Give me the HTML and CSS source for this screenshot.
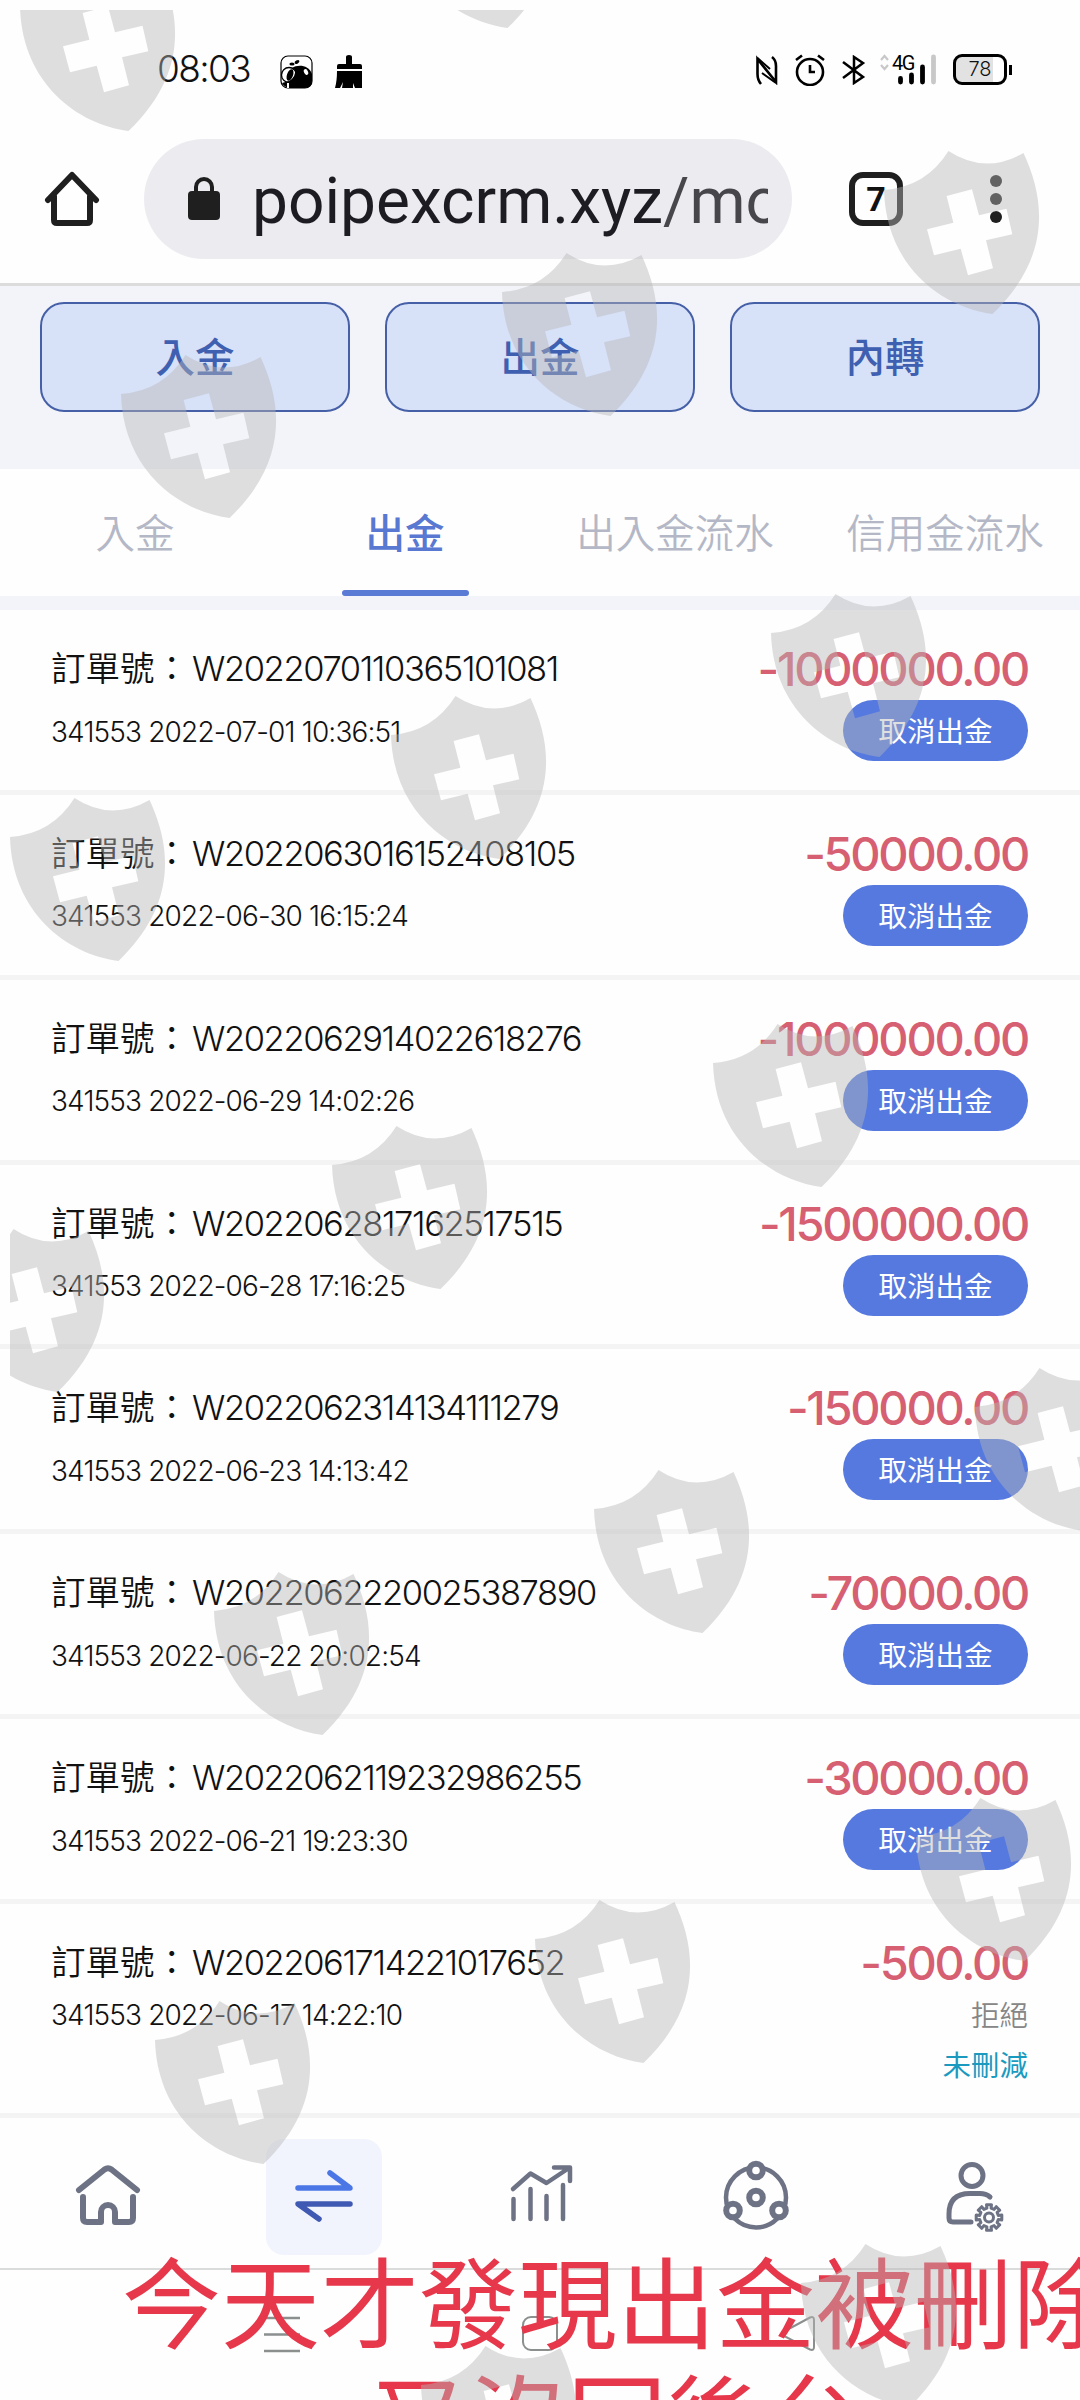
FILE: index.html
```html
<!DOCTYPE html>
<html lang="zh-Hant">
<head>
  <meta charset="UTF-8" />
  <meta name="viewport" content="width=device-width, initial-scale=1.0"/>
  <title>出金</title>
  <link rel="stylesheet" href="styles.css">
</head>
<body>
  <div class="status-bar">
    <span class="time">08:03</span>
    <svg class="app-icon" width="34" height="34" viewBox="0 0 34 34">
      <rect x="1" y="1" width="31" height="32" rx="7" fill="#fff" stroke="#000" stroke-width="1.2"/>
      <path d="M12 13C18 9 29 10 32 19V26Q32 33 25 33H9Q4 32 2 28L9 26Q16 22 15 15Z" fill="#000"/>
      <circle cx="9" cy="20" r="7.5" fill="none" stroke="#000" stroke-width="1.3"/>
      <ellipse cx="10" cy="20" rx="3" ry="6" transform="rotate(20 10 20)"/>
      <ellipse cx="26" cy="17" rx="2" ry="3" fill="#fff" transform="rotate(-25 26 17)"/>
      <ellipse cx="12" cy="9" rx="2.6" ry="1.6"/>
      <ellipse cx="17" cy="7" rx="2.6" ry="1.6" transform="rotate(-30 17 7)"/>
      <path d="M8 28V33" stroke="#fff" stroke-width="2"/>
    </svg>
    <svg class="brush-icon" width="28" height="34" viewBox="0 0 28 34">
      <path d="M11 2Q11 0 14 0T17 2V9H25Q27 9 27 11V14H2V11Q2 9 4 9H11Z"/>
      <path d="M2 16H27V33H20L18 28V33H7L8 27L5 33H0Q2 26 2 16Z"/>
    </svg>
    <div class="status-right">
      <svg width="22" height="30" viewBox="0 0 22 30" fill="none" stroke="#000" stroke-width="2.6">
        <path d="M5 29Q1.5 25 1.5 19V4L20 27V11Q20 5 16 2"/>
        <path d="M6 18L20 28M1.5 3L14 14" stroke-width="2"/>
      </svg>
      <svg width="30" height="32" viewBox="0 0 30 32" fill="none" stroke="#000" stroke-width="2.6">
        <circle cx="15" cy="18" r="13"/>
        <path d="M15 11V18H20M1 6L7 1.5M29 6L23 1.5"/>
      </svg>
      <svg width="24" height="30" viewBox="0 0 24 30" fill="none" stroke="#000" stroke-width="2.5">
        <path d="M1 7L21 22L12 28V2L21 8L1 23"/>
      </svg>
      <svg class="signal" width="56" height="31" viewBox="0 0 56 31">
        <path d="M1 6L4.500 2L8 6M1 11L4.500 15L8 11" fill="none" stroke="#c8c8c8" stroke-width="2.200"/>
        <text x="12" y="16" class="net">4G</text>
        <g stroke-width="4.800" stroke="#000" stroke-linecap="round">
          <path d="M20.500 24.500V28M31.500 21V28M42.500 13V28"/>
          <path d="M53.500 3V28" stroke="#c8c8c8"/>
        </g>
      </svg>
      <div class="battery"><span>78</span></div>
    </div>
  </div>

  <div class="toolbar">
    <svg class="home-icon" width="56" height="58" viewBox="0 0 56 58" fill="none" stroke="#1f1f1f" stroke-width="6" stroke-linecap="round" stroke-linejoin="round">
      <path d="M4 30L28 5L52 30M10 26V50Q10 53 13 53H43Q46 53 46 50V26"/>
    </svg>
    <div class="url-bar">
      <svg width="32" height="44" viewBox="0 0 32 44">
        <rect x="0" y="14" width="32" height="29" rx="4" fill="#1f1f1f"/>
        <path d="M8 15V10A8 8 0 0 1 24 10V15" fill="none" stroke="#1f1f1f" stroke-width="4"/>
      </svg>
      <div class="url">poipexcrm.xyz<span>/mo</span></div>
    </div>
    <div class="tab-count">7</div>
    <div class="dots"><i></i><i></i><i></i></div>
  </div>

  <div class="actions">
    <button>入金</button>
    <button>出金</button>
    <button>內轉</button>
  </div>

  <div class="tabs">
    <div class="tab">入金</div>
    <div class="tab active">出金</div>
    <div class="tab">出入金流水</div>
    <div class="tab">信用金流水</div>
  </div>

  <div class="list">
    <div class="row">
      <div class="order">訂單號：<span>W2022070110365101081</span></div><div class="amount">-1000000.00</div>
      <div class="date">341553 2022-07-01 10:36:51</div><button class="cancel">取消出金</button>
    </div>
    <div class="row">
      <div class="order">訂單號：<span>W2022063016152408105</span></div><div class="amount">-50000.00</div>
      <div class="date">341553 2022-06-30 16:15:24</div><button class="cancel">取消出金</button>
    </div>
    <div class="row">
      <div class="order">訂單號：<span>W2022062914022618276</span></div><div class="amount">-1000000.00</div>
      <div class="date">341553 2022-06-29 14:02:26</div><button class="cancel">取消出金</button>
    </div>
    <div class="row">
      <div class="order">訂單號：<span>W2022062817162517515</span></div><div class="amount">-1500000.00</div>
      <div class="date">341553 2022-06-28 17:16:25</div><button class="cancel">取消出金</button>
    </div>
    <div class="row">
      <div class="order">訂單號：<span>W2022062314134111279</span></div><div class="amount">-150000.00</div>
      <div class="date">341553 2022-06-23 14:13:42</div><button class="cancel">取消出金</button>
    </div>
    <div class="row">
      <div class="order">訂單號：<span>W2022062220025387890</span></div><div class="amount">-70000.00</div>
      <div class="date">341553 2022-06-22 20:02:54</div><button class="cancel">取消出金</button>
    </div>
    <div class="row">
      <div class="order">訂單號：<span>W2022062119232986255</span></div><div class="amount">-30000.00</div>
      <div class="date">341553 2022-06-21 19:23:30</div><button class="cancel">取消出金</button>
    </div>
    <div class="row rejected">
      <div class="order">訂單號：<span>W2022061714221017652</span></div><div class="amount">-500.00</div>
      <div class="date">341553 2022-06-17 14:22:10</div><div class="state">拒絕</div>
      <div class="note">未刪減</div>
    </div>
  </div>

  <div class="bottom-nav">
    <div class="nav-item">
      <svg viewBox="0 0 116 116" stroke-width="6">
        <path d="M29 51L54.500 30.500Q58 28 61.500 30.500L87 51"/>
        <path d="M33 58V79Q33 83 37 83H51V73A7 7 0 0 1 65 73V83H79Q83 83 83 79V58"/>
      </svg>
    </div>
    <div class="nav-item active">
      <svg viewBox="0 0 116 116" stroke-width="5.500">
        <path d="M32 49H84L64 34" stroke="#4b76e6"/>
        <path d="M84 65H32L53 80" stroke="#4059b2"/>
      </svg>
    </div>
    <div class="nav-item">
      <svg viewBox="0 0 116 116" stroke-width="4.500">
        <path d="M31 50L48.500 34.500L64.500 44L87 29M72 28.500H88V42"/>
        <path d="M31.500 60V80M48.500 50V80M64.500 57V80M81 46V80"/>
      </svg>
    </div>
    <div class="nav-item">
      <svg viewBox="0 0 116 116" stroke-width="4.500">
        <circle cx="58" cy="58.500" r="30"/>
        <g fill="#fff" stroke-width="6">
          <circle cx="58" cy="31.500" r="6.800"/>
          <circle cx="35" cy="71.500" r="6.800"/>
          <circle cx="81" cy="71.500" r="6.800"/>
          <circle cx="58" cy="58.500" r="6.800"/>
        </g>
      </svg>
    </div>
    <div class="nav-item">
      <svg viewBox="0 0 116 116" stroke-width="5">
        <circle cx="58" cy="36.500" r="11"/>
        <path d="M76 58Q72 54.500 66 54.500H56Q35 54.500 35 75V79Q35 83 39 83H57"/>
        <g transform="translate(75 78.500)" stroke-width="3">
          <path d="M-2.100 -9.300L-2.500 -12.800H2.500L2.100 -9.300L5.100 -8.100L7.300 -10.800L10.800 -7.300L8.100 -5.100L9.300 -2.100L12.800 -2.500V2.500L9.300 2.100L8.100 5.100L10.800 7.300L7.300 10.800L5.100 8.100L2.100 9.300L2.500 12.800H-2.500L-2.100 9.300L-5.100 8.100L-7.300 10.800L-10.800 7.300L-8.100 5.100L-9.300 2.100L-12.800 2.500V-2.500L-9.300 -2.100L-8.100 -5.100L-10.800 -7.300L-7.300 -10.800L-5.100 -8.100Z"/>
          <circle r="4.500"/>
        </g>
      </svg>
    </div>
  </div>

  <div class="system-nav">
    <svg viewBox="0 0 38 38"><path d="M1 3H37M1 19.500H37M1 36H37" stroke-width="2.500"/></svg>
    <svg viewBox="0 0 38 38"><rect x="2" y="2" width="34" height="33" rx="8"/></svg>
    <svg viewBox="0 0 38 38"><path d="M4 17L31 2.500Q35 1 35 5V32Q35 36 31 34.500L4 20.500Q2 19 4 17Z"/></svg>
  </div>

  <div class="caption">今天才發現出金被刪除<br>又沒回後台</div>

  <!-- shield watermark -->
  <svg class="watermark" width="1080" height="2400" viewBox="0 0 1080 2400">
    <defs>
      <clipPath id="edge"><rect x="10" y="10" width="1070" height="2390"/></clipPath>
      <path id="shield" fill-rule="evenodd" d="M0 39Q42 36 64.500 0Q101 24 139.500 2C161 48 168 106 108.500 163C56 156 2 114 0 39ZM62.600 45L88 38.300L95 64.300L122.500 57.700L128.300 83.300L102 89.300L109 117.300L84 124.300L76.700 97.700L50 104.300L43 78.300L69.400 71.700Z"/>
    </defs>
    <g clip-path="url(#edge)">
      <use href="#shield" x="20" y="-32"/>
      <use href="#shield" x="399" y="-135"/>
      <use href="#shield" x="884" y="151"/>
      <use href="#shield" x="502" y="253"/>
      <use href="#shield" x="121" y="355"/>
      <use href="#shield" x="771" y="594"/>
      <use href="#shield" x="391" y="696"/>
      <use href="#shield" x="10" y="798"/>
      <use href="#shield" x="713" y="1024"/>
      <use href="#shield" x="332" y="1126"/>
      <use href="#shield" x="-51" y="1229"/>
      <use href="#shield" x="975" y="1368"/>
      <use href="#shield" x="594" y="1470"/>
      <use href="#shield" x="214" y="1572"/>
      <use href="#shield" x="916" y="1798"/>
      <use href="#shield" x="535" y="1900"/>
      <use href="#shield" x="155" y="2001"/>
      <use href="#shield" x="801" y="2244"/>
      <use href="#shield" x="421" y="2346"/>
    </g>
  </svg>
</body>
</html>
```

FILE: styles.css
```css
* {
  box-sizing: border-box;
}

body {
  margin: 0;
  position: relative;
  width: 1080px;
  height: 2400px;
  overflow: hidden;
  background: #fefefe;
  font-family: Inter, "Noto Sans CJK TC", sans-serif;
  color: #111;
}

button {
  font-family: inherit;
  padding: 0;
}

.status-bar {
  display: flex;
  align-items: center;
  height: 139px;
  padding: 0 68px 0 157px;
}

.time {
  width: 96px;
  margin-top: -2px;
  font-size: 37px;
  font-weight: 350;
  letter-spacing: -1.6px;
}

.app-icon {
  margin: 4px 0 0 27px;
}

.brush-icon {
  margin: 4px 0 0 21px;
}

.status-right {
  display: flex;
  align-items: center;
  margin-left: auto;
}

.status-right svg {
  margin-right: 17px;
}

.status-right .signal {
  margin-right: 17px;
  margin-left: -3px;
}

.net {
  font: 400 20px Roboto, sans-serif;
  letter-spacing: -1.5px;
}

.battery {
  position: relative;
  width: 54px;
  height: 31px;
  border: 3px solid #000;
  border-radius: 9px;
  background: linear-gradient(90deg, #e2e2e2 78%, #fff 78%);
  text-align: center;
  font-size: 20px;
  font-weight: 300;
  line-height: 25px;
  margin-right: 5px;
}

.battery::after {
  content: "";
  position: absolute;
  right: -8px;
  top: 8px;
  width: 3px;
  height: 10px;
  background: #000;
}

.toolbar {
  display: flex;
  align-items: center;
  height: 147px;
  padding: 0 78px 24px 44px;
  border-bottom: 3px solid #dcdcdd;
}

.url-bar {
  display: flex;
  align-items: center;
  width: 648px;
  height: 120px;
  margin-left: 44px;
  padding: 0 24px 0 44px;
  border-radius: 60px;
  background: #ecebf0;
}

.url {
  flex: 1;
  margin-left: 32px;
  overflow: hidden;
  white-space: nowrap;
  font-family: Roboto, sans-serif;
  font-size: 64px;
  line-height: 90px;
  padding-top: 6px;
  color: #1d1c22;
}

.url span {
  color: #47464b;
}

.tab-count {
  width: 54px;
  height: 54px;
  margin-left: 57px;
  border: 6px solid #1f1f1f;
  border-radius: 14px;
  font: 700 34px/43px Roboto, sans-serif;
  text-align: center;
}

.dots {
  display: flex;
  flex-direction: column;
  gap: 6px;
  margin-left: auto;
}

.dots i {
  width: 12px;
  height: 12px;
  border-radius: 50%;
  background: #1f1f1f;
}

.actions {
  display: grid;
  grid-template-columns: repeat(3, 1fr);
  gap: 35px;
  height: 183px;
  padding: 16px 40px 57px;
  background: #f3f4f9;
}

.actions button {
  padding-bottom: 5px;
  border: 2px solid #4660a8;
  border-radius: 24px;
  background: #d7e1f7;
  color: #3f5fb0;
  font-size: 39.5px;
  font-weight: 500;
}

.tabs {
  display: grid;
  grid-template-columns: repeat(4, 1fr);
  height: 141px;
  border-bottom: 14px solid #f3f4f9;
}

.tab {
  display: flex;
  flex-direction: column;
  align-items: center;
  height: 127px;
  padding-top: 35px;
  line-height: 60px;
  font-size: 39.5px;
  font-weight: 350;
  color: #b4b8c6;
  white-space: nowrap;
}

.tab.active {
  color: #5878d2;
  font-weight: 500;
}

.tab.active::after {
  content: "";
  width: 127px;
  height: 6px;
  margin-top: auto;
  border-radius: 3px;
  background: #5a7bd5;
}

.row {
  display: grid;
  grid-template-columns: 1fr auto;
  grid-template-rows: 50px 61px;
  row-gap: 6px;
  align-items: center;
  height: 184.86px;
  padding: 34px 52px 0 51px;
  border-bottom: 5.5px solid #f4f4f5;
}

.order {
  font-size: 34.5px;
  font-weight: 350;
  line-height: 50px;
}

.order span {
  margin-left: 3px;
  letter-spacing: -1.4px;
}

.date {
  padding-top: 2px;
  font-size: 28px;
  font-weight: 350;
  letter-spacing: -0.85px;
}

.amount {
  text-align: right;
  font-size: 47px;
  font-weight: 500;
  line-height: 50px;
  letter-spacing: -2.3px;
  color: #d75f72;
}

.cancel {
  justify-self: end;
  width: 185px;
  height: 61px;
  padding-bottom: 2px;
  border: none;
  border-radius: 31px;
  background: #5579df;
  color: #fff;
  font-size: 28.5px;
}

.rejected {
  grid-template-rows: 50px 50px 50px;
  row-gap: 0;
  height: 214px;
}

.rejected .date {
  padding-top: 4px;
}

.rejected .state,
.rejected .note {
  text-align: right;
  font-size: 28.5px;
  font-weight: 350;
  color: #868686;
}

.rejected .note {
  grid-column: 2;
  font-weight: 400;
  color: #1b9ac0;
}

.bottom-nav {
  display: grid;
  grid-template-columns: repeat(5, 1fr);
  justify-items: center;
  height: 152px;
  padding-top: 21px;
  border-bottom: 2px solid #d9dcda;
}

.nav-item {
  width: 116px;
  height: 116px;
  border-radius: 18px;
}

.nav-item.active {
  background: #f1f4fd;
}

.nav-item svg {
  display: block;
  fill: none;
  stroke: #6d7385;
  stroke-linecap: round;
  stroke-linejoin: round;
}

.system-nav {
  display: flex;
  justify-content: space-between;
  padding: 45px 263px 0;
}

.system-nav svg {
  width: 38px;
  height: 38px;
  fill: none;
  stroke: #8b8f8e;
  stroke-width: 2;
}

.caption {
  position: absolute;
  left: 117px;
  top: 2247px;
  width: 1000px;
  text-align: center;
  font-size: 99px;
  line-height: 117px;
  white-space: nowrap;
  color: #e6374b;
}

.watermark {
  position: absolute;
  left: 0;
  top: 0;
  fill: rgba(183, 183, 183, 0.444);
}
```
